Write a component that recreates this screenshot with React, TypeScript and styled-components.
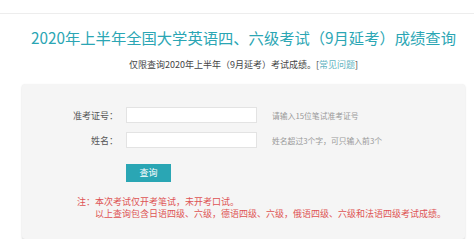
import styled, { createGlobalStyle } from "styled-components";

const GlobalStyle = createGlobalStyle`
  body {
    margin: 0;
    background: #ffffff;
    font-family: "Noto Sans CJK SC", "Noto Sans", sans-serif;
  }
`;

const Header = styled.div`
  height: 13px;
  border-bottom: 1px solid #ededed;
`;

const Main = styled.div`
  margin-left: 22px;
  width: 443px;
`;

const Title = styled.h1`
  margin: 13px 0 0;
  font-size: 15.3px;
  line-height: 20px;
  font-weight: normal;
  color: #2ba6b4;
  text-align: center;
  white-space: nowrap;
`;

const Notice = styled.p`
  margin: 12px 0 0;
  font-size: 9px;
  line-height: 12px;
  color: #444;
  text-align: center;
`;

const HelpLink = styled.a`
  color: #63b4c2;
  text-decoration: none;
`;

const Panel = styled.div`
  margin-top: 13px;
  background: #f5f5f5;
  border-radius: 3px;
  box-shadow: 0 1px 2px rgba(0, 0, 0, 0.18);
  padding: 23px 0 19px;
`;

const Row = styled.div`
  display: flex;
  align-items: center;
  margin-bottom: 9px;
`;

const Label = styled.label`
  width: 96px;
  margin-right: 8px;
  text-align: right;
  font-size: 9px;
  color: #555;
`;

const Input = styled.input`
  box-sizing: border-box;
  width: 131px;
  height: 16px;
  margin: 0;
  padding: 0 4px;
  border: 1px solid #e3e3e3;
  background: #fff;
  outline: none;
`;

const Hint = styled.span`
  margin-left: 15px;
  font-size: 7.8px;
  color: #999;
`;

const Button = styled.button`
  margin: 0 0 0 104px;
  width: 45px;
  height: 18px;
  padding: 0;
  border: none;
  background: #2aa6b4;
  color: #fff;
  font-family: inherit;
  font-size: 9px;
`;

const Note = styled.div`
  margin: 14px 0 0 55px;
  font-size: 9px;
  line-height: 12px;
  color: #de5353;
`;

const NoteLine = styled.div<{ $indent?: boolean }>`
  padding-left: ${(p) => (p.$indent ? "18px" : "0")};
`;

export default function App() {
  return (
    <>
      <GlobalStyle />
      <Header />
      <Main>
        <Title>2020年上半年全国大学英语四、六级考试（9月延考）成绩查询</Title>
        <Notice>
          仅限查询2020年上半年（9月延考）考试成绩。[<HelpLink href="#">常见问题</HelpLink>]
        </Notice>
        <Panel>
          <Row>
            <Label>准考证号：</Label>
            <Input />
            <Hint>请输入15位笔试准考证号</Hint>
          </Row>
          <Row>
            <Label>姓名：</Label>
            <Input />
            <Hint>姓名超过3个字，可只输入前3个</Hint>
          </Row>
          <Button>查询</Button>
          <Note>
            <NoteLine>注：本次考试仅开考笔试，未开考口试。</NoteLine>
            <NoteLine $indent>
              以上查询包含日语四级、六级，德语四级、六级，俄语四级、六级和法语四级考试成绩。
            </NoteLine>
          </Note>
        </Panel>
      </Main>
    </>
  );
}
